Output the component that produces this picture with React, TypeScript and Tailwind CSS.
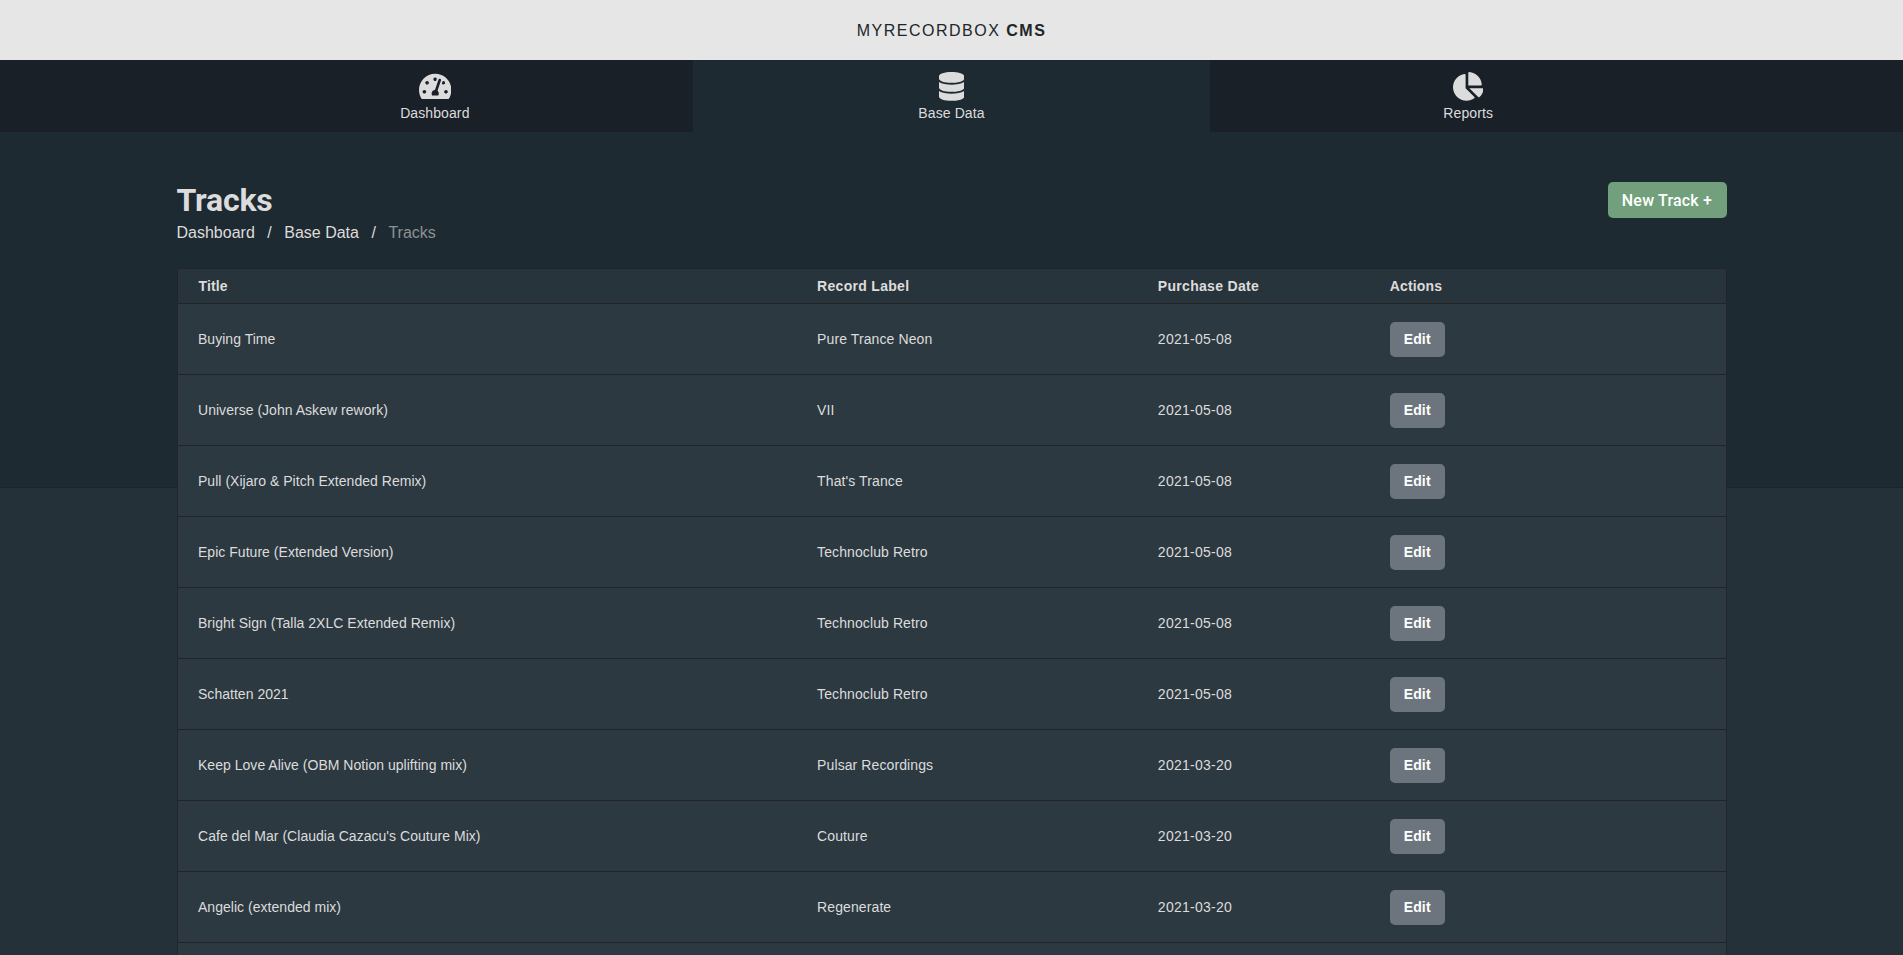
import { FaChartPie, FaDatabase, FaTachometerAlt } from "react-icons/fa";

const nav = [
  { label: "Dashboard", Icon: FaTachometerAlt, width: "w-[32.4px]", active: false },
  { label: "Base Data", Icon: FaDatabase, width: "w-[25.2px]", active: true },
  { label: "Reports", Icon: FaChartPie, width: "w-[30.6px]", active: false },
];

const columns = [
  { label: "Title", head: "tracking-[0.1px] pl-[21px]", cell: "tracking-[0.03px]" },
  { label: "Record Label", head: "tracking-[0.3px] pl-[20.5px]", cell: "tracking-[0.1px]" },
  { label: "Purchase Date", head: "tracking-[0.3px] pl-[20.5px]", cell: "tracking-[0.25px]" },
  { label: "Actions", head: "tracking-[0.15px] pl-5", cell: "" },
];

const tracks = [
  ["Buying Time", "Pure Trance Neon", "2021-05-08"],
  ["Universe (John Askew rework)", "VII", "2021-05-08"],
  ["Pull (Xijaro & Pitch Extended Remix)", "That's Trance", "2021-05-08"],
  ["Epic Future (Extended Version)", "Technoclub Retro", "2021-05-08"],
  ["Bright Sign (Talla 2XLC Extended Remix)", "Technoclub Retro", "2021-05-08"],
  ["Schatten 2021", "Technoclub Retro", "2021-05-08"],
  ["Keep Love Alive (OBM Notion uplifting mix)", "Pulsar Recordings", "2021-03-20"],
  ["Cafe del Mar (Claudia Cazacu's Couture Mix)", "Couture", "2021-03-20"],
  ["Angelic (extended mix)", "Regenerate", "2021-03-20"],
];

export default function App() {
  return (
    <div className="h-screen overflow-hidden bg-[linear-gradient(#1e2a31_487px,#1b242a_487px,#1b242a_488px,#243139_488px)] font-['Liberation_Sans',Arial,sans-serif] text-[#dcdcdc]">
      <header className="flex h-[60px] items-center justify-center bg-[#e6e6e6] pt-0.5 text-base tracking-[1.5px] text-[#212529]">
        <div>
          MYRECORDBOX <b>CMS</b>
        </div>
      </header>

      <nav className="h-[72px] bg-[#192027]">
        <div className="mx-auto grid h-full w-[1550px] grid-cols-3">
          {nav.map(({ label, Icon, width, active }) => (
            <a
              key={label}
              className={`flex flex-col items-center pt-3 text-sm leading-[21px] tracking-[0.1px] ${active ? "bg-[#1e2a31]" : ""}`}
            >
              <Icon preserveAspectRatio="none" className={`mb-[2.2px] h-[28.8px] ${width}`} />
              {label}
            </a>
          ))}
        </div>
      </nav>

      <main className="mx-auto w-[1550px] pt-[50px]">
        <div className="flex h-[86px] items-start justify-between">
          <div>
            <h1 className="font-[Roboto,sans-serif] text-[32px] leading-9 font-bold tracking-[-0.2px]">Tracks</h1>
            <div className="mt-[3px] flex gap-[12.5px] text-base leading-6">
              <span>Dashboard</span>
              <span>/</span>
              <span>Base Data</span>
              <span>/</span>
              <span className="text-[#8d9194]">Tracks</span>
            </div>
          </div>
          <button className="h-9 w-[119px] rounded-[5px] bg-[#729f7c] pt-0.5 font-[Roboto,sans-serif] text-base font-medium tracking-[0.2px] text-white">
            New Track +
          </button>
        </div>

        <table className="w-full table-fixed border-collapse border border-[#232427] text-left text-sm">
          <colgroup>
            <col className="w-[40%]" />
            <col className="w-[22%]" />
            <col className="w-[15%]" />
            <col className="w-[23%]" />
          </colgroup>
          <thead>
            <tr className="h-[35px] border-b border-[#232427] bg-[#28343b]">
              {columns.map(({ label, head }) => (
                <th key={label} className={`py-0 pr-5 font-bold ${head}`}>
                  {label}
                </th>
              ))}
            </tr>
          </thead>
          <tbody>
            {tracks.map((track) => (
              <tr key={track[0]} className="h-[71px] border-b border-[#232427] bg-[#2c3941]">
                {track.map((cell, i) => (
                  <td key={i} className={`py-0 pr-5 pl-[20.5px] ${columns[i].cell}`}>
                    {cell}
                  </td>
                ))}
                <td className="px-5 py-0">
                  <button className="block h-[35px] w-[55px] rounded-[5px] bg-[#6c757d] font-bold tracking-[0.15px] text-white">
                    Edit
                  </button>
                </td>
              </tr>
            ))}
            <tr className="h-[71px] bg-[#2c3941]">
              <td colSpan={4} />
            </tr>
          </tbody>
        </table>
      </main>
    </div>
  );
}
